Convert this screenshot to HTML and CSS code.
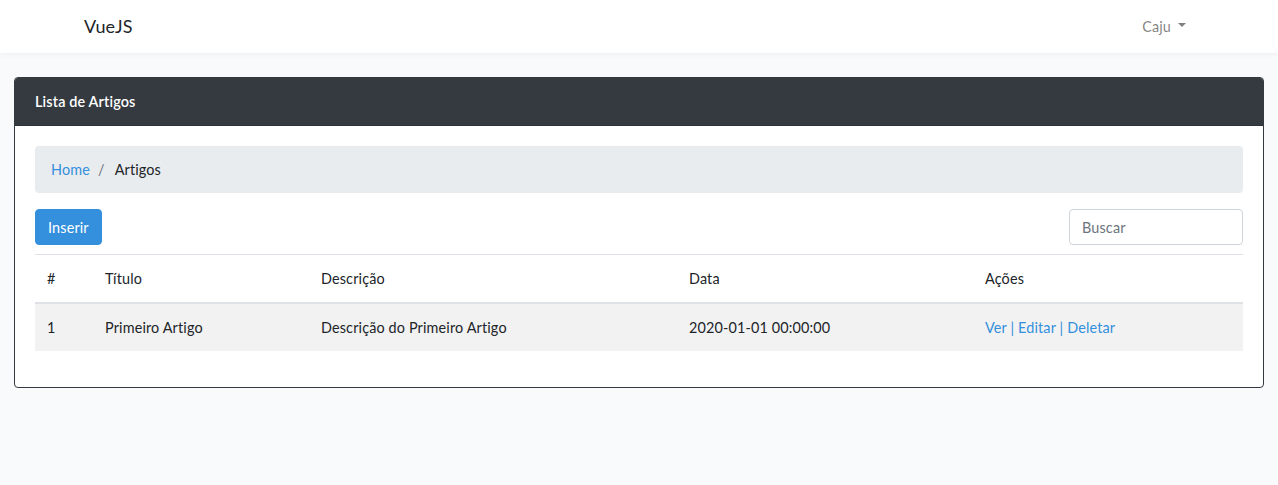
FILE: index.html
```html
<!DOCTYPE html>
<html lang="pt">
<head>
<meta charset="utf-8">
<title>VueJS</title>
<link rel="stylesheet" href="styles.css">
</head>
<body>
<nav class="navbar">
  <div class="nav-inner">
    <a class="brand" href="#">VueJS</a>
    <a class="user" href="#">Caju <span class="caret"></span></a>
  </div>
</nav>
<main class="main">
  <div class="card">
    <div class="card-header">Lista de Artigos</div>
    <div class="card-body">
      <ol class="breadcrumb">
        <li><a href="#">Home</a></li>
        <li class="sep">/</li>
        <li class="active">Artigos</li>
      </ol>
      <div class="toolbar">
        <button class="btn">Inserir</button>
        <input class="search" type="search" placeholder="Buscar">
      </div>
      <table class="table">
        <thead>
          <tr><th class="c1">#</th><th class="c2">Título</th><th class="c3">Descrição</th><th class="c4">Data</th><th class="c5">Ações</th></tr>
        </thead>
        <tbody>
          <tr><td>1</td><td>Primeiro Artigo</td><td>Descrição do Primeiro Artigo</td><td>2020-01-01 00:00:00</td><td class="actions"><a href="#">Ver</a> | <a href="#">Editar</a> | <a href="#">Deletar</a></td></tr>
        </tbody>
      </table>
    </div>
  </div>
</main>
</body>
</html>
```
FILE: styles.css
```css
* { box-sizing: border-box; }
html, body { margin: 0; }
body {
  background: #f8fafc;
  font-family: "Lato", "Open Sans", sans-serif;
  font-size: 14.4px;
  line-height: 1.6;
  letter-spacing: 0.15px;
  color: #212529;
}
a { color: #3490dc; text-decoration: none; }
.navbar {
  background: #fff;
  box-shadow: 0 2px 4px rgba(0,0,0,.04);
  height: 53px;
}
.nav-inner {
  width: 1110px;
  margin: 0 auto;
  height: 100%;
  display: flex;
  align-items: center;
  justify-content: space-between;
}
.brand { color: #212529; font-size: 18px; }
.user { color: rgba(0,0,0,.5); padding: 0 8px; display: flex; align-items: center; }
.caret {
  display: inline-block;
  margin-left: 7px;
  border-top: 4.5px solid rgba(0,0,0,.5);
  border-left: 4.5px solid transparent;
  border-right: 4.5px solid transparent;
  margin-top: -2px;
}
.main { padding: 24px 14px; }
.card {
  background: #fff;
  border: 1px solid #343a40;
  border-radius: 4px;
}
.card-header {
  background: #343a40;
  color: #fff;
  padding: 12px 20px;
  font-weight: 600;
  border-radius: 3px 3px 0 0;
  border-bottom: 1px solid rgba(0,0,0,.125);
}
.card-body { padding: 20px; }
.breadcrumb {
  list-style: none;
  margin: 0 0 16px;
  padding: 12px 16px;
  background: #e9ecef;
  border-radius: 4px;
  display: flex;
}
.breadcrumb .sep { color: #6c757d; padding: 0 10px 0 8px; }
.toolbar {
  display: flex;
  justify-content: space-between;
  align-items: flex-start;
  margin-bottom: 9px;
}
.btn {
  font: inherit;
  letter-spacing: inherit;
  background: #3490dc;
  color: #fff;
  border: 1px solid #3490dc;
  border-radius: 4px;
  padding: 5px 12px;
  height: 36px;
}
.search {
  font: inherit;
  letter-spacing: inherit;
  width: 174px;
  height: 36px;
  border: 1px solid #ced4da;
  border-radius: 4px;
  padding: 6px 12px;
  color: #495057;
}
.search::placeholder { color: #6c757d; }
.table {
  width: 100%;
  border-collapse: collapse;
  margin-bottom: 16px;
}
.table th, .table td {
  text-align: left;
  font-weight: 400;
  padding: 12px;
  border-top: 1px solid #dee2e6;
  vertical-align: top;
}
.table thead th { border-bottom: 2px solid #dee2e6; }
.table tbody tr { background: #f2f2f2; }
.table .actions { color: #3490dc; }
.c1 { width: 58px; }
.c2 { width: 216px; }
.c3 { width: 368px; }
.c4 { width: 296px; }
```
